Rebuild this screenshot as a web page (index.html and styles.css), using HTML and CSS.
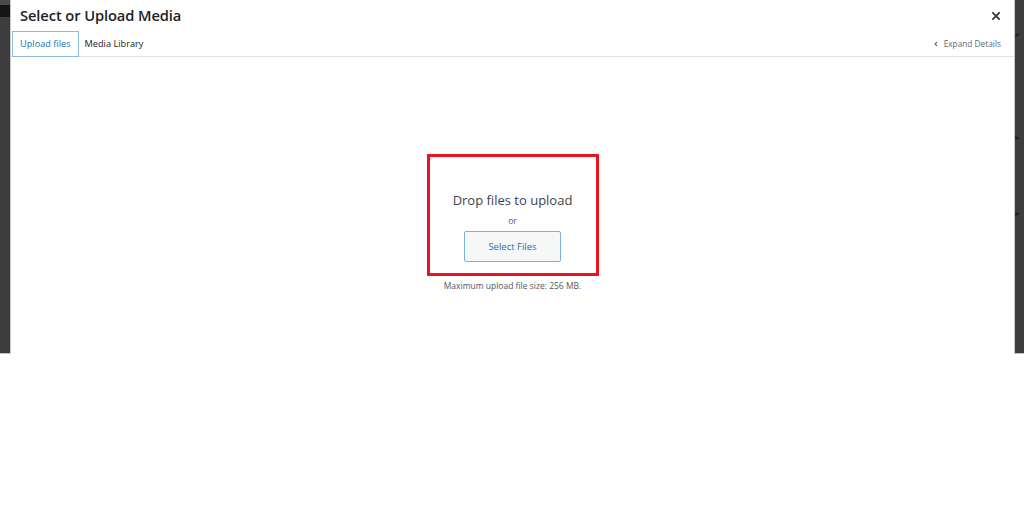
FILE: index.html
```html
<!DOCTYPE html>
<html lang="en">
<head>
<meta charset="utf-8">
<title>Select or Upload Media</title>
<link rel="stylesheet" href="styles.css">
</head>
<body>
<div class="backdrop">
  <div class="strip strip-left"><span class="adminbar"></span></div>
  <div class="modal">
    <div class="frame-title">
      <h1 class="title">Select or Upload Media</h1>
      <button class="close" aria-label="Close dialog">
        <svg viewBox="0 0 10 10" width="8" height="8"><path d="M1.2 1.2 L8.8 8.8 M8.8 1.2 L1.2 8.8" stroke="#3c434a" stroke-width="2.4" stroke-linecap="square" fill="none"/></svg>
      </button>
    </div>
    <div class="router">
      <div class="tabs">
        <button class="tab active">Upload files</button>
        <button class="tab">Media Library</button>
      </div>
      <button class="expand">
        <svg viewBox="0 0 6 8" width="4" height="6"><path d="M4.5 1 L1.5 4 L4.5 7" stroke="#646970" stroke-width="1.6" fill="none"/></svg>
        <span>Expand Details</span>
      </button>
    </div>
    <div class="content">
      <div class="uploader">
        <div class="dropzone">
          <h2 class="drop-text">Drop files to upload</h2>
          <p class="or">or</p>
          <button class="select-btn">Select Files</button>
        </div>
        <p class="max-size">Maximum upload file size: 256 MB.</p>
      </div>
    </div>
  </div>
  <div class="strip strip-right">
    <span class="mark mark-1"></span>
    <span class="mark mark-2"></span>
    <span class="mark mark-3"></span>
  </div>
</div>
</body>
</html>
```

FILE: styles.css
```css
* { box-sizing: border-box; }
html, body { margin: 0; padding: 0; background: #ffffff; }
body {
  font-family: "Open Sans", "Noto Sans", "Liberation Sans", sans-serif;
  color: #3c434a;
  width: 1024px;
  height: 506px;
  overflow: hidden;
}
button {
  font-family: inherit;
  background: none;
  border: 0;
  padding: 0;
  margin: 0;
  cursor: pointer;
}
.backdrop {
  display: flex;
  height: 354px;
  background: #3d3d3d;
}
.strip {
  position: relative;
  background: #3d3d3d;
}
.strip-left {
  width: 10px;
  border-bottom: 1px solid #bfbfbf;
}
.strip-right {
  width: 9px;
  border-bottom: 1px solid #bfbfbf;
}
.adminbar {
  display: block;
  height: 17px;
  background: #141414;
  border-top: 5px solid #4a4a4a;
}
.mark {
  position: absolute;
  left: 0;
  width: 4px;
  height: 2px;
  background: #1e1e1e;
}
.mark-1 { top: 34px; transform: rotate(-40deg); }
.mark-2 { top: 137px; transform: rotate(35deg); }
.mark-3 { top: 213px; transform: rotate(-35deg); }

.modal {
  flex: 1;
  background: #ffffff;
  display: flex;
  flex-direction: column;
  border-left: 1px solid #c8c8c8;
  border-right: 1px solid #c8c8c8;
}
.frame-title {
  height: 31px;
  display: flex;
  align-items: center;
  justify-content: space-between;
  padding: 0 13px 0 9px;
}
.title {
  margin: 0;
  font-size: 14.7px;
  font-weight: 600;
  line-height: 31px;
  color: #1d2327;
  letter-spacing: -0.1px;
}
.close {
  width: 10px;
  height: 10px;
  display: flex;
  align-items: center;
  justify-content: center;
}
.router {
  height: 26px;
  display: flex;
  align-items: stretch;
  justify-content: space-between;
  border-bottom: 1px solid #e2e4e7;
  padding: 0 13px 0 1px;
}
.tabs {
  display: flex;
  align-items: stretch;
}
.tab {
  font-size: 9.2px;
  color: #1d2327;
  padding: 0 6px 1px 5px;
  line-height: 24px;
  border: 1px solid transparent;
}
.tab.active {
  color: #2271b1;
  border-color: #8ebbe3;
  padding: 0 7px 1px 7px;
  margin-bottom: -1px;
  background: #ffffff;
}
.expand {
  display: flex;
  align-items: center;
  gap: 6px;
  font-size: 8.3px;
  color: #646970;
}
.content {
  flex: 1;
  display: flex;
  justify-content: center;
  padding-top: 97px;
}
.uploader {
  display: flex;
  flex-direction: column;
  align-items: center;
}
.dropzone {
  width: 172px;
  height: 122px;
  border: 3px solid #e8141f;
  display: flex;
  flex-direction: column;
  align-items: center;
  padding-top: 33px;
}
.drop-text {
  margin: 0;
  font-size: 13px;
  font-weight: 400;
  line-height: 20px;
  color: #3c434a;
}
.or {
  margin: 4px 0 0;
  font-size: 8.5px;
  line-height: 13px;
  color: #50575e;
}
.select-btn {
  margin-top: 4px;
  width: 97px;
  height: 31px;
  border: 1px solid #7fb0dc;
  border-radius: 2px;
  background: #f6f7f7;
  color: #2271b1;
  font-size: 9.5px;
}
.max-size {
  margin: 3px 0 0;
  font-size: 8.5px;
  line-height: 14px;
  color: #50575e;
}
```
